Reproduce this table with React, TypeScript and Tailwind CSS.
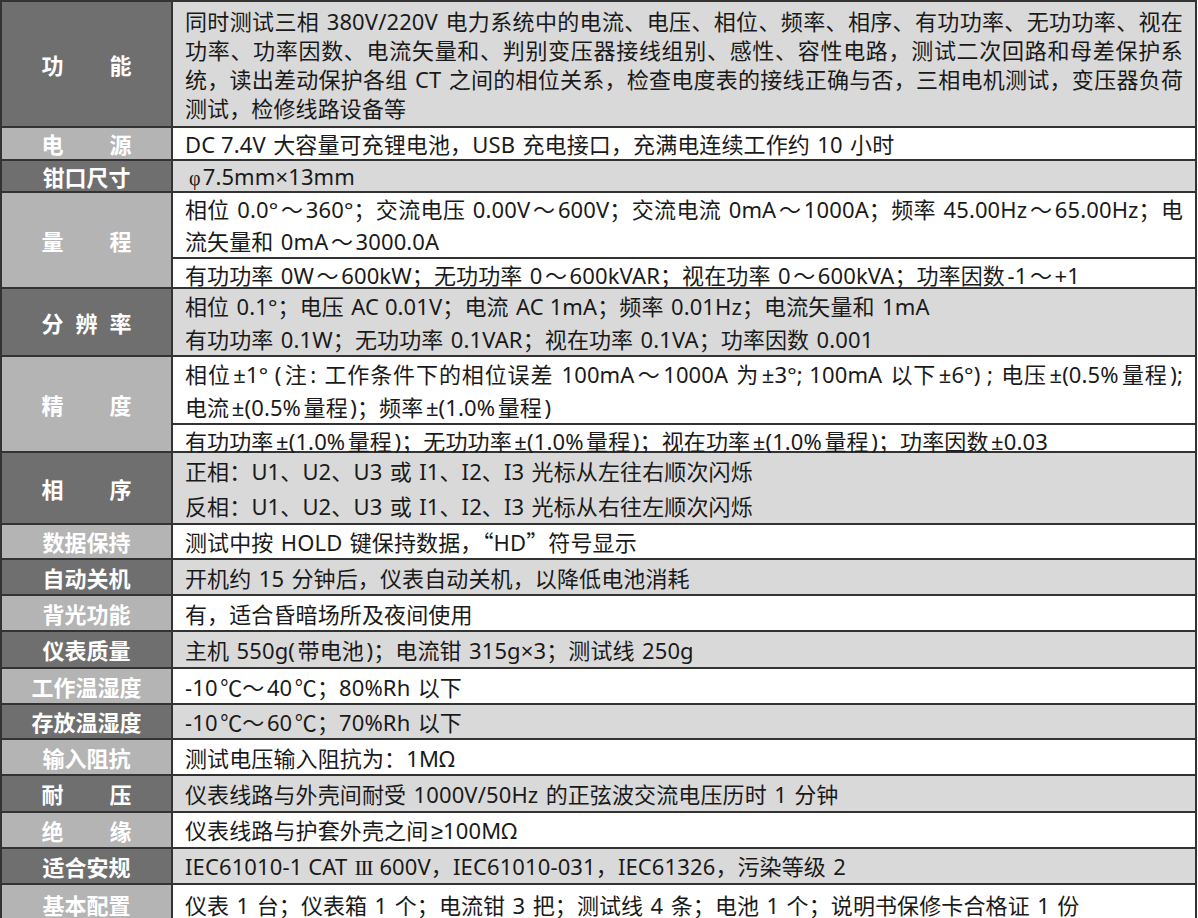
import React from 'react'

type Line = string | React.ReactNode

type Sub = {
  lines: Line[]
  size?: string
  divider?: boolean
  top?: boolean
  leading?: string
  justify?: boolean
}

type Row = {
  label: string
  dark: boolean
  h: string
  subs: Sub[]
}

const CJK = /[\u2E80-\u9FFF\uFF00-\uFFEF\u3000-\u303F\u2103\u2160-\u217F\u201C\u201D]/
const PUNCT = /[，；：、。（）“”！？]/

function cjkRun(s: string) {
  return s.split(/(Ⅲ)/).map((p, j) =>
    p === 'Ⅲ' ? (
      <span key={j} className="font-['Liberation_Serif',serif] tracking-[-1.5px]">
        III
      </span>
    ) : (
      p
    )
  )
}

// splits a line into CJK / latin runs and adds a little gap where they meet (like Word's autospace)
function autospace(text: string) {
  const runs: { cjk: boolean; s: string }[] = []
  for (const ch of text) {
    const isCjk = CJK.test(ch)
    const last = runs[runs.length - 1]
    if (last && last.cjk === isCjk) last.s += ch
    else runs.push({ cjk: isCjk, s: ch })
  }
  return runs.map((r, i) => {
    if (r.cjk) {
      return (
        <span key={i} className="font-['Noto_Sans_CJK_SC',sans-serif]">
          {cjkRun(r.s)}
        </span>
      )
    }
    const prev = runs[i - 1]
    const next = runs[i + 1]
    let left = ''
    let right = ''
    if (prev && !PUNCT.test(prev.s.slice(-1))) left = r.s.startsWith(' ') ? 'ml-[1.5px]' : 'ml-[2.5px]'
    if (next && !PUNCT.test(next.s[0])) right = r.s.endsWith(' ') ? 'mr-[1.5px]' : 'mr-[2.5px]'
    return (
      <span key={i} className={`${left} ${right}`}>
        {r.s.split(/(≥)/).map((p, j) =>
          p === '≥' ? (
            <span key={j} className="font-['Liberation_Sans',sans-serif]">
              ≥
            </span>
          ) : (
            p
          )
        )}
      </span>
    )
  })
}

const rows: Row[] = [
  {
    label: '功能',
    dark: true,
    h: 'h-[126px]',
    subs: [
      {
        top: true,
        justify: true,
        leading: 'leading-[28px]',
        lines: [
          '同时测试三相 380V/220V 电力系统中的电流、电压、相位、频率、相序、有功功率、无功功率、视在',
          '功率、功率因数、电流矢量和、判别变压器接线组别、感性、容性电路，测试二次回路和母差保护系',
          '统，读出差动保护各组 CT 之间的相位关系，检查电度表的接线正确与否，三相电机测试，变压器负荷',
          '测试，检修线路设备等',
        ],
      },
    ],
  },
  {
    label: '电源',
    dark: false,
    h: 'h-[33px]',
    subs: [{ lines: ['DC 7.4V 大容量可充锂电池，USB 充电接口，充满电连续工作约 10 小时'] }],
  },
  {
    label: '钳口尺寸',
    dark: true,
    h: 'h-[32px]',
    subs: [
      {
        lines: [
          <>
            <span className="pl-[4px] pr-[2px] font-['Liberation_Serif',serif] text-[20px]">φ</span>7.5mm×13mm
          </>,
        ],
      },
    ],
  },
  {
    label: '量程',
    dark: false,
    h: 'h-[96px]',
    subs: [
      {
        justify: true,
        leading: 'leading-[31px]',
        lines: [
          '相位 0.0°～360°；交流电压 0.00V～600V；交流电流 0mA～1000A；频率 45.00Hz～65.00Hz；电',
          '流矢量和 0mA～3000.0A',
        ],
      },
      {
        size: 'h-[32px]',
        divider: true,
        lines: ['有功功率 0W～600kW；无功功率 0～600kVAR；视在功率 0～600kVA；功率因数-1～+1'],
      },
    ],
  },
  {
    label: '分辨率',
    dark: true,
    h: 'h-[68px]',
    subs: [
      { lines: ['相位 0.1°；电压 AC 0.01V；电流 AC 1mA；频率 0.01Hz；电流矢量和 1mA'] },
      { lines: ['有功功率 0.1W；无功功率 0.1VAR；视在功率 0.1VA；功率因数 0.001'] },
    ],
  },
  {
    label: '精度',
    dark: false,
    h: 'h-[96px]',
    subs: [
      {
        justify: true,
        leading: 'leading-[32px]',
        lines: [
          '相位±1° (注: 工作条件下的相位误差 100mA～1000A 为±3°; 100mA 以下±6°) ; 电压±(0.5%量程);',
          '电流±(0.5%量程)；频率±(1.0%量程)',
        ],
      },
      {
        size: 'h-[33px]',
        divider: true,
        lines: ['有功功率±(1.0%量程)；无功功率±(1.0%量程)；视在功率±(1.0%量程)；功率因数±0.03'],
      },
    ],
  },
  {
    label: '相序',
    dark: true,
    h: 'h-[72px]',
    subs: [
      { lines: ['正相：U1、U2、U3 或 I1、I2、I3 光标从左往右顺次闪烁'] },
      { lines: ['反相：U1、U2、U3 或 I1、I2、I3 光标从右往左顺次闪烁'] },
    ],
  },
  { label: '数据保持', dark: false, h: 'h-[35px]', subs: [{ lines: ['测试中按 HOLD 键保持数据，“HD”符号显示'] }] },
  { label: '自动关机', dark: true, h: 'h-[36px]', subs: [{ lines: ['开机约 15 分钟后，仪表自动关机，以降低电池消耗'] }] },
  { label: '背光功能', dark: false, h: 'h-[36px]', subs: [{ lines: ['有，适合昏暗场所及夜间使用'] }] },
  { label: '仪表质量', dark: true, h: 'h-[37px]', subs: [{ lines: ['主机 550g(带电池)；电流钳 315g×3；测试线 250g'] }] },
  { label: '工作温湿度', dark: false, h: 'h-[36px]', subs: [{ lines: ['-10℃～40℃；80%Rh 以下'] }] },
  { label: '存放温湿度', dark: true, h: 'h-[35px]', subs: [{ lines: ['-10℃～60℃；70%Rh 以下'] }] },
  { label: '输入阻抗', dark: false, h: 'h-[36px]', subs: [{ lines: ['测试电压输入阻抗为：1MΩ'] }] },
  { label: '耐压', dark: true, h: 'h-[37px]', subs: [{ lines: ['仪表线路与外壳间耐受 1000V/50Hz 的正弦波交流电压历时 1 分钟'] }] },
  { label: '绝缘', dark: false, h: 'h-[36px]', subs: [{ lines: ['仪表线路与护套外壳之间≥100MΩ'] }] },
  {
    label: '适合安规',
    dark: true,
    h: 'h-[36px]',
    subs: [{ lines: ['IEC61010-1 CAT Ⅲ 600V，IEC61010-031，IEC61326，污染等级 2'] }],
  },
  {
    label: '基本配置',
    dark: false,
    h: 'h-[40px]',
    subs: [{ lines: ['仪表 1 台；仪表箱 1 个；电流钳 3 把；测试线 4 条；电池 1 个；说明书保修卡合格证 1 份'] }],
  },
]

function Label({ text }: { text: string }) {
  const chars = [...text]
  if (chars.length <= 3) {
    return (
      <div className="flex w-[90px] justify-between">
        {chars.map((c, i) => (
          <span key={i}>{c}</span>
        ))}
      </div>
    )
  }
  return <span>{text}</span>
}

export default function App() {
  return (
    <div className="h-[918px] w-[1198px] overflow-hidden bg-white font-['Noto_Sans','Noto_Sans_CJK_SC',sans-serif] text-[22px] tracking-[0.12px] text-[#1a1a1a]">
      <div className="w-[1197px] border-x-2 border-[#333]">
        {rows.map((row) => (
          <div key={row.label} className={`flex border-t-2 border-[#333] ${row.h}`}>
            <div
              className={`flex w-[171px] shrink-0 items-center justify-center border-r-2 border-[#333] font-['Noto_Sans_CJK_SC',sans-serif] font-bold tracking-normal text-white ${
                row.dark ? 'bg-[#6f6f6f]' : 'bg-[#b4b4b4]'
              }`}
            >
              <Label text={row.label} />
            </div>
            <div className={`flex min-w-0 flex-1 flex-col ${row.dark ? 'bg-[#d9d9d9]' : 'bg-white'}`}>
              {row.subs.map((sub, i) => (
                <div
                  key={i}
                  className={`flex flex-col pl-[12px] pr-[12px] ${sub.top ? 'justify-start pt-[4px]' : 'justify-center'} ${
                    sub.size ?? 'flex-1'
                  } ${sub.divider ? 'border-t-2 border-[#333]' : ''} ${sub.leading ?? 'leading-[30px]'}`}
                >
                  {sub.lines.map((line, j) => (
                    <div
                      key={j}
                      className={`whitespace-nowrap ${
                        sub.justify && j < sub.lines.length - 1 ? 'text-justify [text-align-last:justify]' : ''
                      }`}
                    >
                      {typeof line === 'string' ? autospace(line) : line}
                    </div>
                  ))}
                </div>
              ))}
            </div>
          </div>
        ))}
      </div>
    </div>
  )
}
